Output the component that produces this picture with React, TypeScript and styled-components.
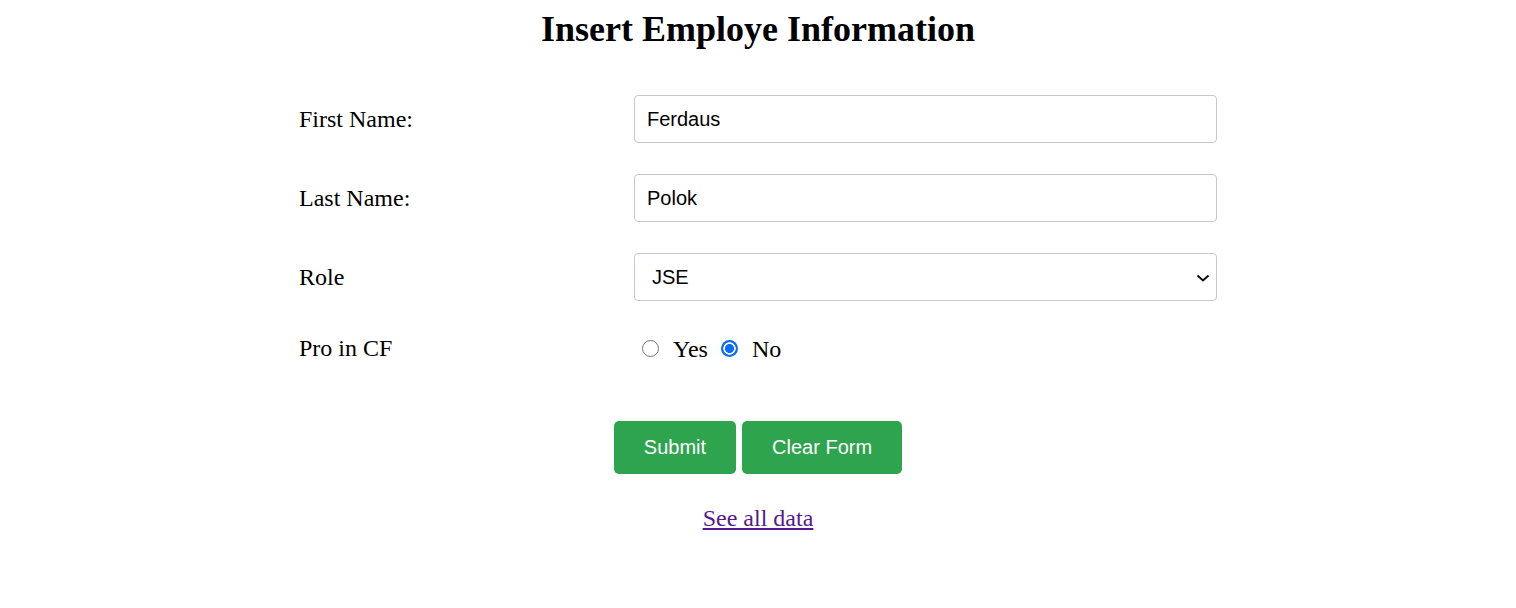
import React, { useState } from "react";
import styled, { createGlobalStyle } from "styled-components";

const GlobalStyle = createGlobalStyle`
  html, body { margin: 0; padding: 0; background: #ffffff; }
  body { font-family: "Liberation Serif", "Times New Roman", serif; color: #000; }
`;

const Page = styled.div`
  padding-top: 9px;
  display: flex;
  flex-direction: column;
  align-items: center;
`;

const Title = styled.h1`
  margin: 0;
  font-size: 36px;
  font-weight: bold;
  line-height: 41px;
`;

const Form = styled.form`
  margin-top: 45px;
  width: 918px;
  display: flex;
  flex-direction: column;
  align-items: center;
`;

const Fields = styled.div`
  width: 100%;
  display: grid;
  grid-template-columns: 335px 1fr;
  row-gap: 31px;
  align-items: center;
`;

const Label = styled.label`
  font-size: 24px;
  line-height: 28px;
`;

const TextInput = styled.input`
  box-sizing: border-box;
  width: 100%;
  height: 48px;
  padding: 0 12px;
  border: 1px solid #c8c8c8;
  border-radius: 4px;
  font-family: "Liberation Sans", Arial, sans-serif;
  font-size: 20px;
  color: #000;
  background: #fff;
  outline: none;
`;

const SelectWrap = styled.div`
  position: relative;
  width: 100%;
`;

const Select = styled.select`
  box-sizing: border-box;
  width: 100%;
  height: 48px;
  padding: 0 12px 0 17px;
  border: 1px solid #c8c8c8;
  border-radius: 4px;
  font-family: "Liberation Sans", Arial, sans-serif;
  font-size: 20px;
  color: #000;
  background: #fff;
  appearance: none;
  -webkit-appearance: none;
  outline: none;
`;

const Chevron = styled.svg`
  position: absolute;
  right: 7px;
  top: 50%;
  margin-top: -3px;
  pointer-events: none;
`;

const RadioGroup = styled.div`
  height: 32px;
  display: flex;
  align-items: center;
  padding-left: 8px;
`;

const Radio = styled.input`
  appearance: none;
  -webkit-appearance: none;
  box-sizing: border-box;
  flex: none;
  width: 17px;
  height: 17px;
  margin: 0 14px 0 0;
  border: 1px solid #767676;
  border-radius: 50%;
  background: #fff;
  &:checked {
    border: none;
    background: radial-gradient(circle, #0a6cff 0 4.2px, #fff 4.8px 5.9px, #0a6cff 6.5px);
  }
`;

const RadioText = styled.span`
  font-size: 24px;
  line-height: 28px;
  margin-right: 13px;
  padding-top: 2px;
`;

const Buttons = styled.div`
  margin-top: 57px;
  display: flex;
  gap: 6px;
`;

const Button = styled.button`
  font-family: "Liberation Sans", Arial, sans-serif;
  font-size: 20px;
  line-height: 23px;
  color: #fff;
  background: #2ea44f;
  border: none;
  border-radius: 5px;
  padding: 15px 30px;
  cursor: pointer;
`;

const DataLink = styled.a`
  margin-top: 30px;
  font-size: 24px;
  line-height: 28px;
  color: #551a8b;
  text-decoration: underline;
`;

export default function App() {
  const [first, setFirst] = useState("Ferdaus");
  const [last, setLast] = useState("Polok");
  const [role, setRole] = useState("JSE");
  const [pro, setPro] = useState("no");

  return (
    <>
      <GlobalStyle />
      <Page>
        <Title>Insert Employe Information</Title>
        <Form onSubmit={(e) => e.preventDefault()}>
          <Fields>
            <Label htmlFor="first">First Name:</Label>
            <TextInput id="first" value={first} onChange={(e) => setFirst(e.target.value)} />
            <Label htmlFor="last">Last Name:</Label>
            <TextInput id="last" value={last} onChange={(e) => setLast(e.target.value)} />
            <Label htmlFor="role">Role</Label>
            <SelectWrap>
              <Select id="role" value={role} onChange={(e) => setRole(e.target.value)}>
                <option value="JSE">JSE</option>
                <option value="SE">SE</option>
                <option value="SSE">SSE</option>
              </Select>
              <Chevron width="14" height="8" viewBox="0 0 14 8">
                <path d="M1.5 1.5 L7 6.5 L12.5 1.5" fill="none" stroke="#111" strokeWidth="2" />
              </Chevron>
            </SelectWrap>
            <Label>Pro in CF</Label>
            <RadioGroup>
              <Radio type="radio" name="pro" checked={pro === "yes"} onChange={() => setPro("yes")} />
              <RadioText>Yes</RadioText>
              <Radio type="radio" name="pro" checked={pro === "no"} onChange={() => setPro("no")} />
              <RadioText>No</RadioText>
            </RadioGroup>
          </Fields>
          <Buttons>
            <Button type="submit">Submit</Button>
            <Button type="button" onClick={() => { setFirst(""); setLast(""); }}>Clear Form</Button>
          </Buttons>
          <DataLink href="#">See all data</DataLink>
        </Form>
      </Page>
    </>
  );
}
